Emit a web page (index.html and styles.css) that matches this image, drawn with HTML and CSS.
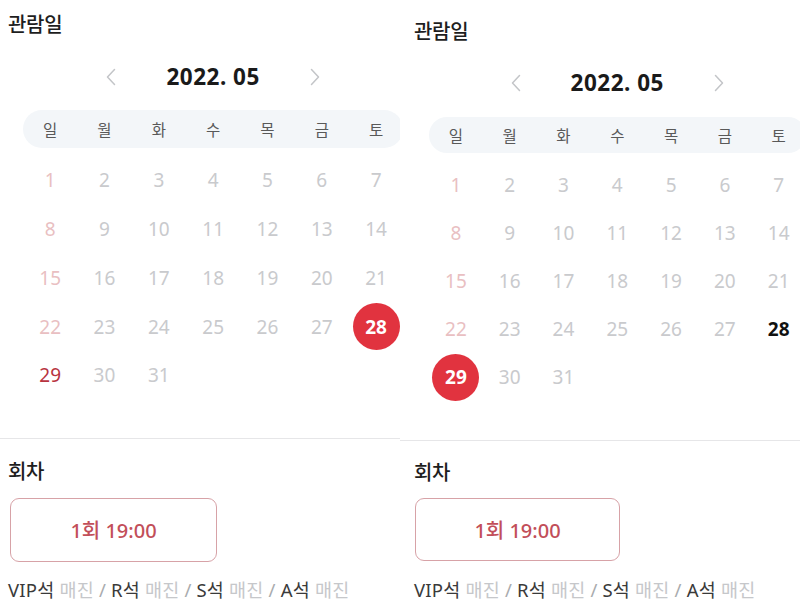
FILE: index.html
```html
<!DOCTYPE html>
<html lang="ko">
<head>
<meta charset="utf-8">
<title>관람일 선택</title>
<link rel="stylesheet" href="styles.css">
</head>
<body>
<div class="page">
  <section class="panel panel--a">
    <h2 class="title">관람일</h2>
    <div class="cal">
      <div class="month">
        <svg class="chev" viewBox="0 0 10 18" width="10" height="18"><path d="M8.5 1.5 L1.5 9 L8.5 16.5"/></svg>
        <span class="month-label">2022. 05</span>
        <svg class="chev" viewBox="0 0 10 18" width="10" height="18"><path d="M1.5 1.5 L8.5 9 L1.5 16.5"/></svg>
      </div>
      <div class="weekdays"><span>일</span><span>월</span><span>화</span><span>수</span><span>목</span><span>금</span><span>토</span></div>
      <div class="days">
        <span class="day sun">1</span><span class="day">2</span><span class="day">3</span><span class="day">4</span><span class="day">5</span><span class="day">6</span><span class="day">7</span>
        <span class="day sun">8</span><span class="day">9</span><span class="day">10</span><span class="day">11</span><span class="day">12</span><span class="day">13</span><span class="day">14</span>
        <span class="day sun">15</span><span class="day">16</span><span class="day">17</span><span class="day">18</span><span class="day">19</span><span class="day">20</span><span class="day">21</span>
        <span class="day sun">22</span><span class="day">23</span><span class="day">24</span><span class="day">25</span><span class="day">26</span><span class="day">27</span><span class="day"><span class="pick">28</span></span>
        <span class="day sun-open">29</span><span class="day">30</span><span class="day">31</span>
      </div>
    </div>
    <hr class="divider">
    <div class="session">
      <h2 class="title">회차</h2>
      <button class="slot" type="button">1회 19:00</button>
      <p class="seats"><span class="grade">VIP석</span> <span class="sold">매진</span> <span class="sep">/</span> <span class="grade">R석</span> <span class="sold">매진</span> <span class="sep">/</span> <span class="grade">S석</span> <span class="sold">매진</span> <span class="sep">/</span> <span class="grade">A석</span> <span class="sold">매진</span></p>
    </div>
  </section>

  <section class="panel panel--b">
    <h2 class="title">관람일</h2>
    <div class="cal">
      <div class="month">
        <svg class="chev" viewBox="0 0 10 18" width="10" height="18"><path d="M8.5 1.5 L1.5 9 L8.5 16.5"/></svg>
        <span class="month-label">2022. 05</span>
        <svg class="chev" viewBox="0 0 10 18" width="10" height="18"><path d="M1.5 1.5 L8.5 9 L1.5 16.5"/></svg>
      </div>
      <div class="weekdays"><span>일</span><span>월</span><span>화</span><span>수</span><span>목</span><span>금</span><span>토</span></div>
      <div class="days">
        <span class="day sun">1</span><span class="day">2</span><span class="day">3</span><span class="day">4</span><span class="day">5</span><span class="day">6</span><span class="day">7</span>
        <span class="day sun">8</span><span class="day">9</span><span class="day">10</span><span class="day">11</span><span class="day">12</span><span class="day">13</span><span class="day">14</span>
        <span class="day sun">15</span><span class="day">16</span><span class="day">17</span><span class="day">18</span><span class="day">19</span><span class="day">20</span><span class="day">21</span>
        <span class="day sun">22</span><span class="day">23</span><span class="day">24</span><span class="day">25</span><span class="day">26</span><span class="day">27</span><span class="day open">28</span>
        <span class="day"><span class="pick">29</span></span><span class="day">30</span><span class="day">31</span>
      </div>
    </div>
    <hr class="divider">
    <div class="session">
      <h2 class="title">회차</h2>
      <button class="slot" type="button">1회 19:00</button>
      <p class="seats"><span class="grade">VIP석</span> <span class="sold">매진</span> <span class="sep">/</span> <span class="grade">R석</span> <span class="sold">매진</span> <span class="sep">/</span> <span class="grade">S석</span> <span class="sold">매진</span> <span class="sep">/</span> <span class="grade">A석</span> <span class="sold">매진</span></p>
    </div>
  </section>
</div>
</body>
</html>
```

FILE: styles.css
```css
* { box-sizing: border-box; }

html, body {
  margin: 0;
  padding: 0;
  background: #ffffff;
}

body {
  font-family: "Noto Sans", "Noto Sans CJK KR", "Liberation Sans", sans-serif;
  color: #222;
}

.page {
  display: flex;
  width: 800px;
  height: 600px;
  overflow: hidden;
}

.panel {
  width: 400px;
  height: 600px;
  flex: none;
  overflow: hidden;
  padding-top: var(--pt);
  padding-left: var(--pl);
}

.panel--a {
  --pt: 13px;
  --pl: 8px;
  --col: 54.33px;
  --month-gap: 20px;
  --bar-gap: 13px;
  --bar-h: 38px;
  --row-h: 48.75px;
  --div-gap: 38px;
  --sess-gap: 21px;
  --btn-gap: 14px;
  --btn-h: 64px;
  --btn-w: 207px;
  --btn-ml: 2px;
  --seat-gap: 17px;
}

.panel--b {
  --pt: 20px;
  --pl: 14px;
  --col: 53.8px;
  --month-gap: 19px;
  --bar-gap: 14px;
  --bar-h: 36px;
  --row-h: 48px;
  --div-gap: 39px;
  --sess-gap: 20px;
  --btn-gap: 13px;
  --btn-h: 63px;
  --btn-w: 205px;
  --btn-ml: 1px;
  --seat-gap: 18px;
}

.title {
  margin: 0;
  font-size: 20px;
  line-height: 24px;
  font-weight: 500;
  color: #1e1e1e;
  letter-spacing: -0.3px;
}

.cal {
  margin-left: 15px;
  width: calc(var(--col) * 7);
}

.month {
  margin-top: var(--month-gap);
  height: 40px;
  display: flex;
  align-items: center;
  justify-content: center;
  gap: 50px;
}

.chev {
  flex: none;
}

.chev path {
  fill: none;
  stroke: #c3c5c8;
  stroke-width: 1.5;
  stroke-linecap: round;
  stroke-linejoin: round;
}

.month-label {
  font-size: 22.5px;
  font-weight: 700;
  color: #1a1a1a;
  line-height: 40px;
  letter-spacing: 0.5px;
}

.weekdays {
  margin-top: var(--bar-gap);
  height: var(--bar-h);
  display: grid;
  grid-template-columns: repeat(7, var(--col));
  align-items: center;
  background: #f3f6f9;
  border-radius: 19px;
}

.weekdays span {
  text-align: center;
  font-size: 15.5px;
  color: #595959;
}

.days {
  margin-top: 8px;
  display: grid;
  grid-template-columns: repeat(7, var(--col));
  grid-auto-rows: var(--row-h);
}

.day {
  display: flex;
  align-items: center;
  justify-content: center;
  font-size: 19px;
  color: #c9cacd;
}

.day.sun {
  color: #e9bfc2;
}

.day.sun-open {
  color: #b8343f;
}

.day.open {
  color: #111;
  font-weight: 700;
}

.pick {
  width: 47px;
  height: 47px;
  border-radius: 50%;
  background: #e1333f;
  color: #fff;
  font-weight: 700;
  display: flex;
  align-items: center;
  justify-content: center;
}

.divider {
  margin: var(--div-gap) 0 0 calc(var(--pl) * -1);
  width: 400px;
  border: 0;
  border-top: 1px solid #e6e6e8;
  height: 0;
}

.session {
  padding-top: var(--sess-gap);
}

.slot {
  display: flex;
  align-items: center;
  justify-content: center;
  margin: var(--btn-gap) 0 0 var(--btn-ml);
  width: var(--btn-w);
  height: var(--btn-h);
  border: 1.5px solid #d7a2a7;
  border-radius: 9px;
  background: #fff;
  font-family: inherit;
  font-size: 20px;
  font-weight: 500;
  color: #c24e59;
  padding: 0;
}

.seats {
  margin: var(--seat-gap) 0 0;
  font-size: 18.5px;
  line-height: 22px;
  white-space: nowrap;
  letter-spacing: 0.2px;
}

.grade {
  color: #3a3a3a;
}

.sold {
  color: #c6c7ca;
}

.sep {
  color: #a9abae;
}
```
